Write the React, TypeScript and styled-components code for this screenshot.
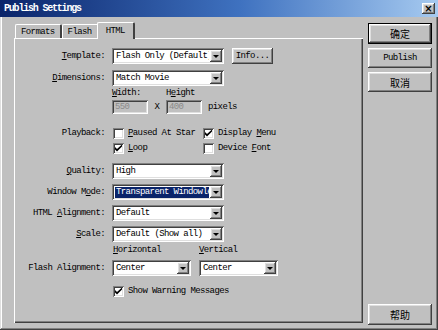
import React from 'react';
import styled, {createGlobalStyle, css} from 'styled-components';

const GlobalStyle = createGlobalStyle`
  html, body {
    margin: 0;
    padding: 0;
    background: #c0c0c0;
  }
  body {
    font-family: "Liberation Mono", "DejaVu Sans Mono", monospace;
    font-size: 9px;
    letter-spacing: -0.6px;
    color: #000;
  }
  u {
    text-decoration-thickness: 1px;
    text-underline-offset: 1px;
  }
`

const raised = css`
  box-shadow: inset -1px -1px #404040, inset 1px 1px #ffffff,
              inset -2px -2px #808080, inset 2px 2px #dfdfdf;
`

const sunken = css`
  box-shadow: inset 1px 1px #808080, inset -1px -1px #ffffff,
              inset 2px 2px #404040, inset -2px -2px #dfdfdf;
`

const Window = styled.div`
  width: 438px;
  height: 330px;
  box-sizing: border-box;
  background: #c0c0c0;
  display: flex;
  flex-direction: column;
  box-shadow: inset -1px -1px #404040, inset 1px 0 #dfdfdf,
              inset -2px -2px #808080, inset 2px 0 #ffffff;
  overflow: hidden;
`

const TitleBar = styled.div`
  height: 17px;
  flex: none;
  display: flex;
  align-items: center;
  justify-content: space-between;
  padding: 0 3px 0 4px;
  background: linear-gradient(to right, #0a246a 0%, #3f72c0 55%, #a6caf0 100%);
  color: #fff;
  font-size: 10px;
  letter-spacing: -1.2px;
  font-weight: bold;
`

const CloseButton = styled.div`
  width: 13px;
  height: 11px;
  background: #c0c0c0;
  ${raised};
  color: #000;
  font-family: "DejaVu Sans", sans-serif;
  font-size: 10px;
  font-weight: bold;
  letter-spacing: 0;
  line-height: 11px;
  text-align: center;
`

const Body = styled.div`
  flex: 1;
  display: flex;
  gap: 5px;
  padding: 4px 6px 7px 14px;
  min-height: 0;
`

const TabArea = styled.div`
  width: 349px;
  display: flex;
  flex-direction: column;
`

const TabRow = styled.div`
  display: flex;
  align-items: flex-end;
  height: 17px;
  padding-left: 1px;
`

const Tab = styled.div<{$active?: boolean}>`
  position: relative;
  height: ${p => p.$active ? 17 : 14}px;
  box-sizing: border-box;
  padding: 0 ${p => p.$active ? 8 : 5}px;
  margin-left: ${p => p.$active ? -2 : 0}px;
  margin-right: ${p => p.$active ? -2 : 0}px;
  margin-bottom: ${p => p.$active ? -1 : 0}px;
  z-index: ${p => p.$active ? 2 : 1};
  background: #c0c0c0;
  border-radius: 2px 2px 0 0;
  border-top: 1px solid #fff;
  border-left: 1px solid #fff;
  border-right: 2px solid #404040;
  display: flex;
  align-items: center;
  line-height: 10px;
`

const Panel = styled.div`
  flex: 1;
  box-sizing: border-box;
  padding: 10px 0 0 2px;
  box-shadow: inset 1px 1px #ffffff, inset -1px -1px #404040,
              inset -2px -2px #808080;
  display: flex;
  flex-direction: column;
`

const Row = styled.div<{$top: number; $h?: number}>`
  display: grid;
  grid-template-columns: 89px auto;
  column-gap: 7px;
  align-items: center;
  margin-top: ${p => p.$top}px;
  height: ${p => p.$h ?? 16}px;
`

const Label = styled.span`
  text-align: right;
  white-space: nowrap;
`

const Controls = styled.div<{$gap?: number}>`
  display: flex;
  align-items: center;
  gap: ${p => p.$gap ?? 0}px;
  white-space: nowrap;
`

const SelectBox = styled.div<{$w: number}>`
  width: ${p => p.$w}px;
  height: 16px;
  box-sizing: border-box;
  background: #fff;
  ${sunken};
  display: flex;
  align-items: center;
  padding: 2px 2px 2px 3px;
  overflow: hidden;
`

const SelectText = styled.span<{$selected?: boolean}>`
  flex: 1;
  overflow: hidden;
  white-space: nowrap;
  line-height: 11px;
  padding-left: 1px;
  margin-right: 1px;
  background: ${p => p.$selected ? '#0a246a' : 'transparent'};
  color: ${p => p.$selected ? '#fff' : '#000'};
`

const ArrowButton = styled.span`
  width: 12px;
  height: 12px;
  flex: none;
  background: #c0c0c0;
  ${raised};
  display: flex;
  align-items: center;
  justify-content: center;

  &::after {
    content: '';
    border-left: 3px solid transparent;
    border-right: 3px solid transparent;
    border-top: 3px solid #000;
    margin-top: 1px;
  }
`

const Button = styled.div<{$w: number; $h: number; $default?: boolean; $cjk?: boolean}>`
  width: ${p => p.$w}px;
  height: ${p => p.$h}px;
  box-sizing: border-box;
  background: #c0c0c0;
  display: flex;
  align-items: center;
  justify-content: center;
  ${p => p.$default ? css`
    box-shadow: inset 0 0 0 1px #000, inset -2px -2px #404040, inset 2px 2px #ffffff,
                inset -3px -3px #808080, inset 3px 3px #dfdfdf;
  ` : raised};
  ${p => p.$cjk && css`
    font-family: "Noto Sans CJK SC", sans-serif;
    font-size: 10px;
    letter-spacing: 0;
  `}
`

const TextInput = styled.div<{$w: number}>`
  width: ${p => p.$w}px;
  height: 14px;
  box-sizing: border-box;
  background: #c0c0c0;
  ${sunken};
  color: #8a8a8a;
  padding: 2px 3px;
  line-height: 10px;
`

const Cross = styled.span`
  width: 18px;
  text-align: center;
`

const CheckGrid = styled.div`
  display: grid;
  grid-template-columns: 90px auto;
  align-items: center;
`

const Check = styled.label`
  display: flex;
  align-items: center;
  gap: 4px;
  padding-left: 1px;
  white-space: nowrap;
`

const Box = styled.span`
  width: 11px;
  height: 11px;
  box-sizing: border-box;
  background: #fff;
  ${sunken};
  display: flex;
  align-items: center;
  justify-content: center;
`

const Side = styled.div`
  width: 64px;
  display: flex;
  flex-direction: column;
  gap: 4px;
  padding-top: 2px;
`

const HelpSlot = styled.div`
  margin-top: auto;
  margin-bottom: -2px;
`

const Tick = () => (
  <svg width="7" height="7" viewBox="0 0 7 7">
    <path d="M0 2 L0 4.5 L2 6.5 L7 1.5 L7 -0.5 L2 4 Z" fill="#000" />
  </svg>
);

const CheckItem: React.FC<{on?: boolean; children: React.ReactNode}> = ({on, children}) => (
  <Check>
    <Box>{on && <Tick />}</Box>
    <span>{children}</span>
  </Check>
);

const Select: React.FC<{w: number; value: string; selected?: boolean}> = ({w, value, selected}) => (
  <SelectBox $w={w}>
    <SelectText $selected={selected}>{value}</SelectText>
    <ArrowButton />
  </SelectBox>
);

const App: React.FC = () => {
  return (
    <>
      <GlobalStyle />
      <Window>
        <TitleBar>
          <span>Publish Settings</span>
          <CloseButton>×</CloseButton>
        </TitleBar>
        <Body>
          <TabArea>
            <TabRow>
              <Tab>Formats</Tab>
              <Tab>Flash</Tab>
              <Tab $active>HTML</Tab>
            </TabRow>
            <Panel>
              <Row $top={0}>
                <Label><u>T</u>emplate:</Label>
                <Controls $gap={8}>
                  <Select w={112} value="Flash Only (Default)" />
                  <Button $w={41} $h={16}>Info...</Button>
                </Controls>
              </Row>
              <Row $top={6}>
                <Label><u>D</u>imensions:</Label>
                <Controls>
                  <Select w={112} value="Match Movie" />
                </Controls>
              </Row>
              <Row $top={1} $h={11}>
                <span />
                <Controls>
                  <span style={{width: 54}}><u>W</u>idth:</span>
                  <span>H<u>e</u>ight</span>
                </Controls>
              </Row>
              <Row $top={2} $h={14}>
                <span />
                <Controls>
                  <TextInput $w={36}>550</TextInput>
                  <Cross>X</Cross>
                  <TextInput $w={36}>400</TextInput>
                  <span style={{marginLeft: 6}}>pixels</span>
                </Controls>
              </Row>
              <Row $top={13} $h={12}>
                <Label>Playback:</Label>
                <CheckGrid>
                  <CheckItem><u>P</u>aused At Star</CheckItem>
                  <CheckItem on>Display <u>M</u>enu</CheckItem>
                </CheckGrid>
              </Row>
              <Row $top={3} $h={12}>
                <span />
                <CheckGrid>
                  <CheckItem on><u>L</u>oop</CheckItem>
                  <CheckItem>Device <u>F</u>ont</CheckItem>
                </CheckGrid>
              </Row>
              <Row $top={9}>
                <Label><u>Q</u>uality:</Label>
                <Controls>
                  <Select w={112} value="High" />
                </Controls>
              </Row>
              <Row $top={5}>
                <Label>Window M<u>o</u>de:</Label>
                <Controls>
                  <Select w={112} value="Transparent Windowless" selected />
                </Controls>
              </Row>
              <Row $top={5}>
                <Label>HTML <u>A</u>lignment:</Label>
                <Controls>
                  <Select w={112} value="Default" />
                </Controls>
              </Row>
              <Row $top={5}>
                <Label><u>S</u>cale:</Label>
                <Controls>
                  <Select w={112} value="Default (Show all)" />
                </Controls>
              </Row>
              <Row $top={2} $h={12}>
                <span />
                <Controls>
                  <span style={{width: 86, paddingLeft: 1}}><u>H</u>orizontal</span>
                  <span><u>V</u>ertical</span>
                </Controls>
              </Row>
              <Row $top={4}>
                <Label>Flash Alignment:</Label>
                <Controls $gap={8}>
                  <Select w={79} value="Center" />
                  <Select w={79} value="Center" />
                </Controls>
              </Row>
              <Row $top={9} $h={12}>
                <span />
                <CheckItem on>Show Warning Messages</CheckItem>
              </Row>
            </Panel>
          </TabArea>
          <Side>
            <Button $w={64} $h={21} $default $cjk>确定</Button>
            <Button $w={64} $h={20}>Publish</Button>
            <Button $w={64} $h={20} $cjk>取消</Button>
            <HelpSlot>
              <Button $w={64} $h={21} $cjk>帮助</Button>
            </HelpSlot>
          </Side>
        </Body>
      </Window>
    </>
  );
}

export default App;
